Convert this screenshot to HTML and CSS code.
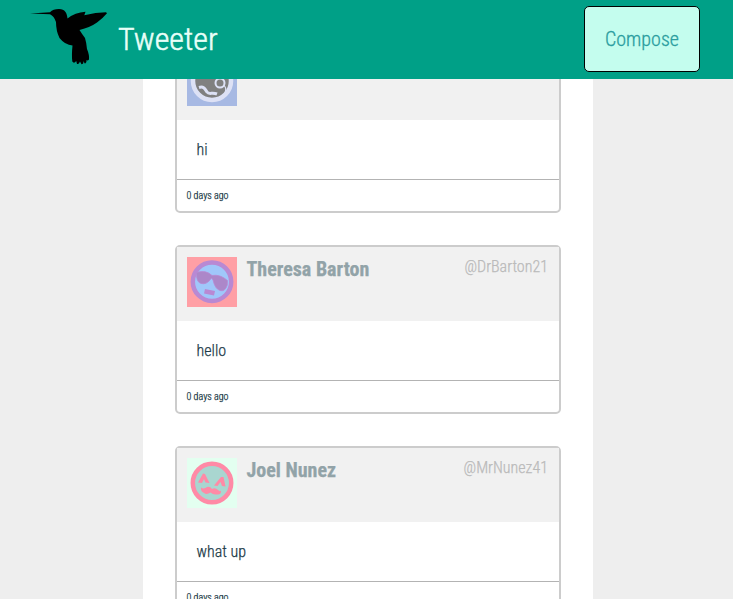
FILE: index.html
```html
<!DOCTYPE html>
<html lang="en">
<head>
<meta charset="utf-8">
<title>Tweeter</title>
<link rel="stylesheet" href="styles.css">
</head>
<body>
<header class="nav">
  <svg class="logo" viewBox="0 0 80 60" aria-hidden="true"><path d="M0 8.400 L20 7.300 Q23 4 29 4 C35 4 37 8 37.500 13.500 Q45 7.500 55.500 6.800 L54.300 10.300 Q66 7.500 76 7.300 L77 8.200 Q73 13 67 17.500 Q60 22.500 49.500 25 Q52 29 55 33 Q56.500 38 57 44 Q59.500 50 59 54.500 Q57.500 56 56.500 55 Q57 58 55 58.700 L53.200 56 Q54 59 51.500 59.200 L50 56.500 Q49 59.500 47 59 L46.200 56 Q44 59 42.300 56.500 Q41.500 50 42.500 40.500 Q35 40 29.500 33 Q26 26 26 17 Q24 11 20 9.200 Z"/></svg>
  <h1 class="brand"><span class="cond">Tweeter</span></h1>
  <button class="compose"><span class="cond">Compose</span></button>
</header>
<main class="feed">
  <article class="tweet">
    <div class="tweet-head">
      <svg class="avatar" viewBox="0 0 50 50"><path fill="#a7b9e3" d="M0 0h50v50H0z"/><circle cx="25" cy="25" r="19" fill="#808080" stroke="#dde1f5" stroke-width="4.500"/><g fill="none" stroke="#dde1f5"><circle cx="33" cy="27" r="4.500" stroke-width="2"/><path stroke-width="1.200" d="M37 29Q41 34 36 41"/><path stroke-width="3" d="M12 31.500C17 30 18 33 20 36S25 36 30 38"/></g></svg>
    </div>
    <p class="tweet-text"><span class="cond">hi</span></p>
    <footer class="tweet-foot"><span class="cond">0 days ago</span></footer>
  </article>
  <article class="tweet">
    <div class="tweet-head">
      <svg class="avatar" viewBox="0 0 50 50"><path fill="#ff9fa5" d="M0 0h50v50H0z"/><circle cx="25" cy="24.700" r="19.200" fill="#a0c7fa" stroke="#b989d3" stroke-width="4.500"/><path fill="#ac87c9" stroke="#b989d3" stroke-width=".8" d="M9.500 15.500Q19 12.500 25 18.500Q33 17 40.500 23.500L40.300 28Q38 35 33 33.500Q28 32 26 23L24.500 21Q20 28 14 26.500Q9 25 9.500 15.500Z"/><path fill="#b989d3" d="M18 32l10 2-1 4.500-10-2z"/></svg>
      <h2 class="name"><span class="cond">Theresa Barton</span></h2>
      <span class="handle"><span class="cond">@DrBarton21</span></span>
    </div>
    <p class="tweet-text"><span class="cond">hello</span></p>
    <footer class="tweet-foot"><span class="cond">0 days ago</span></footer>
  </article>
  <article class="tweet">
    <div class="tweet-head">
      <svg class="avatar" viewBox="0 0 50 50"><path fill="#e3fff0" d="M0 0h50v50H0z"/><circle cx="25" cy="25" r="19.200" fill="#a9d6d0" stroke="#ff8aa6" stroke-width="4.500"/><path fill="#ff8aa6" d="M11 24.500L16 15.500 18 16 22.500 25 18.500 24.500 17 21 15 25ZM27 27.500L34 19 36.500 19 38.500 28.500 35 28 33.500 24 30.500 28ZM14 29.500Q17 31.500 20 29Q23 28 25 31Q28 29 31 32Q33 34 34 32.500Q34.500 37 30 36.500Q26 37 23.500 34.500Q20 37 17 35Q13.500 33.500 14 29.500Z"/></svg>
      <h2 class="name"><span class="cond">Joel Nunez</span></h2>
      <span class="handle"><span class="cond">@MrNunez41</span></span>
    </div>
    <p class="tweet-text"><span class="cond">what up</span></p>
    <footer class="tweet-foot"><span class="cond">0 days ago</span></footer>
  </article>
</main>
</body>
</html>
```
FILE: styles.css
```css
* { box-sizing: border-box; }
body {
  margin: 0;
  height: 599px;
  overflow: hidden;
  background: #eeeeee;
  color: #244751;
  font-family: "Roboto Condensed", Roboto, sans-serif;
  font-stretch: 75%;
  font-weight: 300;
  -webkit-text-stroke-width: 0.25px;
}
.cond { display: inline-block; white-space: nowrap; }
.nav {
  display: flex;
  height: 79px;
  padding: 6px 33px 7px 30px;
  background: #00a087;
}
.logo { width: 80px; height: 60px; margin-top: -1px; }
.brand {
  margin: 0 0 0 8px;
  color: #e8fff8;
  font-size: 32px;
  font-weight: 300;
  line-height: 66px;
  -webkit-text-stroke-width: 0.5px;
}
.compose {
  width: 116px;
  height: 66px;
  margin-left: auto;
  padding: 0;
  border: 1px solid #000;
  border-radius: 5px;
  background: #c4fdee;
  color: #2b9d9f;
  font: inherit;
  font-size: 20px;
  -webkit-text-stroke-width: 0.3px;
}
.feed {
  width: 450px;
  height: 520px;
  margin: 0 auto 0 143px;
  padding: 0 32px;
  overflow: hidden;
  background: #fff;
}
.tweet {
  height: 169px;
  margin-bottom: 32px;
  border: 2px solid #cccccc;
  border-radius: 5px;
  background: #fff;
}
.tweet:first-child { margin-top: -35px; }
.tweet-head {
  display: flex;
  height: 74px;
  padding: 10px 11px 0 10px;
  background: #f1f1f1;
}
.avatar { width: 50px; height: 50px; }
.name {
  margin: 0 0 0 9.5px;
  color: #92a3a8;
  font-size: 20px;
  font-weight: 700;
  line-height: 24px;
}
.handle {
  margin-left: auto;
  color: #bababa;
  font-size: 16px;
  line-height: 20px;
}
.tweet-text {
  height: 59px;
  margin: 0;
  padding-left: 19.5px;
  color: #1c3a48;
  font-size: 16px;
  line-height: 59px;
}
.tweet-foot {
  height: 32px;
  padding-left: 9.5px;
  border-top: 1px solid #b3b3b3;
  color: #1c3a48;
  font-size: 10px;
  line-height: 31px;
}
```
